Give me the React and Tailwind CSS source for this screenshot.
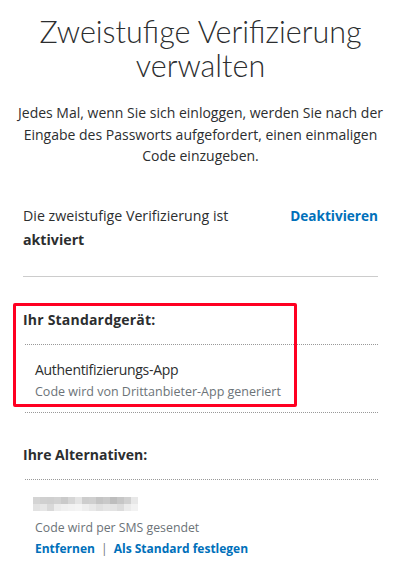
import React from "react";

const row1 = ["#d4d4d4","#d0d0d0","#cfcfcf","#d2d2d2","#cacaca","#d6d6d6","#e4e4e4","#cdcdcd","#cfcfcf","#c4c4c4","#c9c9c9","#bdbdbd","#c6c6c6","#d0d0d0","#e8e8e8"];
const row2 = ["#e2e2e2","#e6e6e6","#d9d9d9","#ececec","#f0f0f0","#f2f2f2","#f4f4f4","#eeeeee","#e8e8e8","#e0e0e0","#e5e5e5","#e3e3e3","#dcdcdc","#ebebeb","#f2f2f2"];

export default function App() {
  return (
    <div className="relative w-[401px] h-[562px] bg-white overflow-hidden text-[#2c2e2f]" style={{ fontFamily: "'Open Sans', sans-serif" }}>
      <div className="px-[12px] pt-[14px]">
        <h1 className="text-center text-[30.5px] font-light leading-[34px] text-[#2c2e2f]" style={{ fontFamily: "Lato, sans-serif" }}>
          Zweistufige Verifizierung verwalten
        </h1>
        <p className="mt-[20px] text-center text-[14px] leading-[21.5px] text-[#2c2e2f]">
          Jedes Mal, wenn Sie sich einloggen, werden Sie nach der Eingabe des Passworts aufgefordert, einen einmaligen Code einzugeben.
        </p>
      </div>

      <div className="px-[24px] mx-[-1px]">
        <div className="mt-[37px] flex justify-between text-[14.2px] leading-[24px]">
          <div>
            Die zweistufige Verifizierung ist<br />
            <span className="font-bold">aktiviert</span>
          </div>
          <span className="font-bold text-[13.6px] text-[#0070ba]">Deaktivieren</span>
        </div>
        <div className="mt-[24px] border-t border-[#cccccc]" />

        <div className="mt-[33px] text-[14px] font-bold leading-[20px] tracking-[0.2px]">Ihr Standardgerät:</div>
        <div className="mt-[14px] ml-[2px] border-t border-dotted border-[#999999]" />
        <div className="pl-[12px] pt-[14px] pb-[9px]">
          <div className="text-[14px] leading-[22px] tracking-[-0.3px]">Authentifizierungs-App</div>
          <div className="text-[12.5px] leading-[22px] text-[#6c7378]">Code wird von Drittanbieter-App generiert</div>
        </div>
        <div className="ml-[2px] border-t border-dotted border-[#999999]" />

        <div className="mt-[32px] text-[14px] font-bold leading-[20px]">Ihre Alternativen:</div>
        <div className="mt-[14px] ml-[2px] border-t border-dotted border-[#999999]" />
        <div className="pl-[10px] pt-[17px]">
          <div className="flex flex-col">
            <div className="flex">
              {row1.map((c, i) => (
                <div key={i} className="w-[7px] h-[7px]" style={{ background: c }} />
              ))}
            </div>
            <div className="flex">
              {row2.map((c, i) => (
                <div key={i} className="w-[7px] h-[7px]" style={{ background: c }} />
              ))}
            </div>
          </div>
          <div className="mt-[6px] pl-[2px] text-[12.3px] leading-[22px] text-[#6c7378]">Code wird per SMS gesendet</div>
          <div className="pl-[2px] text-[12px] leading-[20px] font-bold text-[#0070ba]">
            Entfernen <span className="font-normal text-[#6c7378] mx-[3px]">|</span> Als Standard festlegen
          </div>
        </div>
      </div>

      <div className="absolute left-[13px] top-[303px] w-[284px] h-[104px] border-[3px] border-[#ff0022] rounded-[2px] pointer-events-none" />
    </div>
  );
}
